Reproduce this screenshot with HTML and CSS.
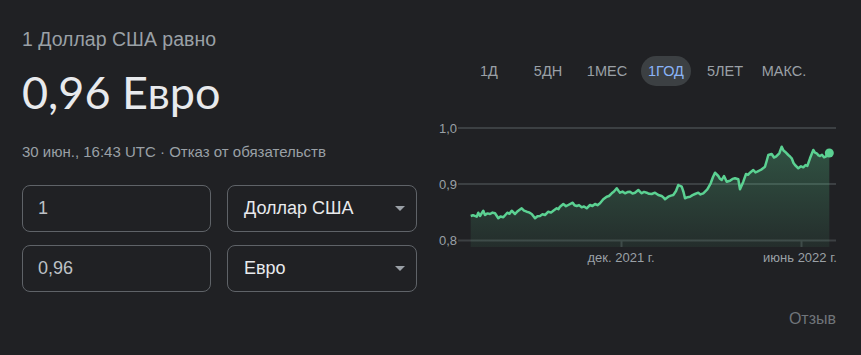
FILE: index.html
```html
<!DOCTYPE html>
<html lang="ru">
<head>
  <meta charset="UTF-8">
  <title>Конвертер валют</title>
  <link rel="stylesheet" href="styles.css">
</head>
<body>
  <div class="converter">
    <div class="left">
      <div class="caption">1 Доллар США равно</div>
      <div class="result">0,96 Евро</div>
      <div class="meta">30 июн., 16:43 UTC · <span class="disclaimer">Отказ от обязательств</span></div>

      <div class="fields">
        <input class="amount" type="text" value="1">
        <div class="currency">Доллар США <span class="arrow"></span></div>
        <input class="amount" type="text" value="0,96">
        <div class="currency">Евро <span class="arrow"></span></div>
      </div>
    </div>

    <div class="right">
      <div class="tabs">
        <span class="tab">1Д</span>
        <span class="tab">5ДН</span>
        <span class="tab">1МЕС</span>
        <span class="tab active">1ГОД</span>
        <span class="tab">5ЛЕТ</span>
        <span class="tab">МАКС.</span>
      </div>

      <svg class="chart" width="415" height="160" viewBox="0 0 415 160">
        <defs>
          <linearGradient id="area" x1="0" y1="36" x2="0" y2="137" gradientUnits="userSpaceOnUse">
            <stop offset="0" stop-color="#5bd192" stop-opacity="0.28"/>
            <stop offset="1" stop-color="#5bd192" stop-opacity="0.07"/>
          </linearGradient>
        </defs>
        <g class="grid">
          <line x1="28" y1="18" x2="406" y2="18"/>
          <line x1="28" y1="74" x2="406" y2="74"/>
          <line x1="28" y1="130.5" x2="406" y2="130.5"/>
          <line x1="191.5" y1="130" x2="191.5" y2="137"/>
          <line x1="371.5" y1="130" x2="371.5" y2="137"/>
        </g>
        <g class="axis">
          <text x="27" y="22.5" text-anchor="end">1,0</text>
          <text x="27" y="78.5" text-anchor="end">0,9</text>
          <text x="27" y="135" text-anchor="end">0,8</text>
          <text x="191" y="152" text-anchor="middle">дек. 2021 г.</text>
          <text x="370" y="152" text-anchor="middle">июнь 2022 г.</text>
        </g>
        <polygon class="area" points="40.7,106 46.7,106.7 48.3,102.7 50,106 53.3,100.7 55,105 60,104 65,103.3 68.3,108.3 73.3,107.3 77.3,102.7 81.7,100.7 85,104 89.3,100 91.7,98.3 96.7,101.7 101.7,104 105,108.3 110,106 115,105 118.3,101.7 123.3,100.7 126.7,98.3 130,96.7 133.3,94 138.3,95 142.7,92.7 146.7,96 151.7,97.3 156.7,98.3 160,95 165,94 170,93.3 173.3,89.3 176.7,86.7 181.7,83.3 186.7,78.3 190,82.7 195,83.3 200,81.7 205,82.7 208.3,80 211.7,83.3 216.7,82.7 221.7,84 225,82.7 228.3,85 231.7,86 235,89.3 238.3,86.7 243.3,85 248.3,75 251.7,76.7 255,88.3 260,86.7 265,84 268.3,82.7 273.3,83.3 277.3,79.3 280.7,73.3 285,62.7 288.3,66 291.7,70 294,66 296.7,71.7 300,70.7 305,68.3 308.3,69.3 310,79.3 313.3,71.7 316,64 320,62.7 323.3,60 327.3,61.7 331.7,59.3 335,56.7 338.3,45 341.7,44 346,46.7 349.3,43.3 351.7,36.7 355,41.7 358.3,45 361.7,48.3 365,55 368.3,58.3 373.3,57.3 377.3,56 380,48.3 383.3,40 386.7,43.3 390,46 394,47.3 396.7,46 399.3,44 399.3,137 40.7,137"/>
        <polyline class="line" points="40.7,106 43,105.2 46.7,106.7 48.3,102.7 50,106 53.3,100.7 55,105 57.5,103.4 60,104 62.5,102.6 65,103.3 68.3,108.3 70.5,106.5 73.3,107.3 77.3,102.7 79.5,103.8 81.7,100.7 85,104 87,101.8 89.3,100 91.7,98.3 94,100.6 96.7,101.7 99,102.4 101.7,104 105,108.3 107.5,106.2 110,106 112.5,104.3 115,105 118.3,101.7 121,102.6 123.3,100.7 126.7,98.3 128.5,99.2 130,96.7 133.3,94 136,96.2 138.3,95 142.7,92.7 144.5,95.3 146.7,96 149,95.1 151.7,97.3 154,96.4 156.7,98.3 160,95 162.5,96 165,94 167.5,95.2 170,93.3 173.3,89.3 176.7,86.7 179,86 181.7,83.3 184,81.5 186.7,78.3 188.5,80.8 190,82.7 192.5,81.6 195,83.3 197.5,82.1 200,81.7 202.5,83.6 205,82.7 208.3,80 211.7,83.3 214,81.9 216.7,82.7 219,83.8 221.7,84 225,82.7 228.3,85 231.7,86 233.5,87.4 235,89.3 238.3,86.7 241,85.6 243.3,85 246,81 248.3,75 251.7,76.7 253.5,82 255,88.3 257.5,87.2 260,86.7 262.5,85.1 265,84 268.3,82.7 270.5,84.4 273.3,83.3 277.3,79.3 280.7,73.3 283,67 285,62.7 288.3,66 290,68.8 291.7,70 294,66 296.7,71.7 300,70.7 302.5,68.9 305,68.3 308.3,69.3 310,79.3 313.3,71.7 316,64 318,64.8 320,62.7 323.3,60 325.5,62.4 327.3,61.7 329.5,60.5 331.7,59.3 335,56.7 336.8,50.5 338.3,45 341.7,44 344,47.5 346,46.7 349.3,43.3 351.7,36.7 353.5,40.5 355,41.7 358.3,45 360,46.5 361.7,48.3 363.5,53 365,55 368.3,58.3 371,56.3 373.3,57.3 375.5,55.1 377.3,56 380,48.3 383.3,40 385,42.6 386.7,43.3 388.5,45.4 390,46 392,44.8 394,47.3 396.7,46 399.3,44"/>
        <circle class="dot" cx="399.3" cy="43" r="4.5"/>
      </svg>

      <div class="feedback">Отзыв</div>
    </div>
  </div>
</body>
</html>
```

FILE: styles.css
```css
body {
  margin: 0;
  background: #202124;
  font-family: 'Liberation Sans', Arial, sans-serif;
  color: #9aa0a6;
}

.converter {
  display: flex;
  padding-left: 22px;
  height: 355px;
}

.left {
  width: 395px;
  padding-top: 27px;
}

.caption {
  font-size: 19.5px;
  line-height: 24px;
}

.result {
  margin-top: 15px;
  font-family: 'Lato', 'Open Sans', sans-serif;
  font-size: 45px;
  line-height: 52px;
  color: #e8eaed;
}

.meta {
  margin-top: 24px;
  font-size: 15px;
  line-height: 20px;
}

.fields {
  display: grid;
  grid-template-columns: 189px 190px;
  column-gap: 16px;
  row-gap: 13px;
  margin-top: 23px;
}

.amount,
.currency {
  box-sizing: border-box;
  height: 47px;
  border: 1px solid #5f6368;
  border-radius: 8px;
  background: transparent;
  font-family: 'Liberation Sans', Arial, sans-serif;
  font-size: 18px;
}

.amount {
  padding: 0 15px;
  color: #bdc1c6;
  outline: none;
}

.currency {
  display: flex;
  align-items: center;
  justify-content: space-between;
  padding: 0 11px 0 16px;
  color: #e8eaed;
}

.arrow {
  width: 0;
  height: 0;
  border-left: 5px solid transparent;
  border-right: 5px solid transparent;
  border-top: 5px solid #9aa0a6;
}

.right {
  width: 415px;
  margin-left: 13px;
  padding-top: 56px;
  display: flex;
  flex-direction: column;
}

.tabs {
  display: flex;
  gap: 9px;
  margin-left: 34px;
}

.tab {
  width: 50px;
  height: 30px;
  line-height: 30px;
  text-align: center;
  border-radius: 15px;
  font-size: 14.5px;
  white-space: nowrap;
}

.tab.active {
  background: #3c4043;
  color: #8ab4f8;
}

.chart {
  display: block;
  margin-top: 24px;
}

.grid line {
  stroke: #3c4043;
  stroke-width: 2;
}

.axis text {
  font-family: 'Liberation Sans', Arial, sans-serif;
  font-size: 13px;
  fill: #9aa0a6;
}

.area {
  fill: url(#area);
}

.line {
  fill: none;
  stroke: #5bd192;
  stroke-width: 2.5;
  stroke-linejoin: round;
}

.dot {
  fill: #5bd192;
}

.feedback {
  margin-top: 40px;
  padding-right: 9px;
  text-align: right;
  font-size: 16px;
  color: #70757a;
}
```
